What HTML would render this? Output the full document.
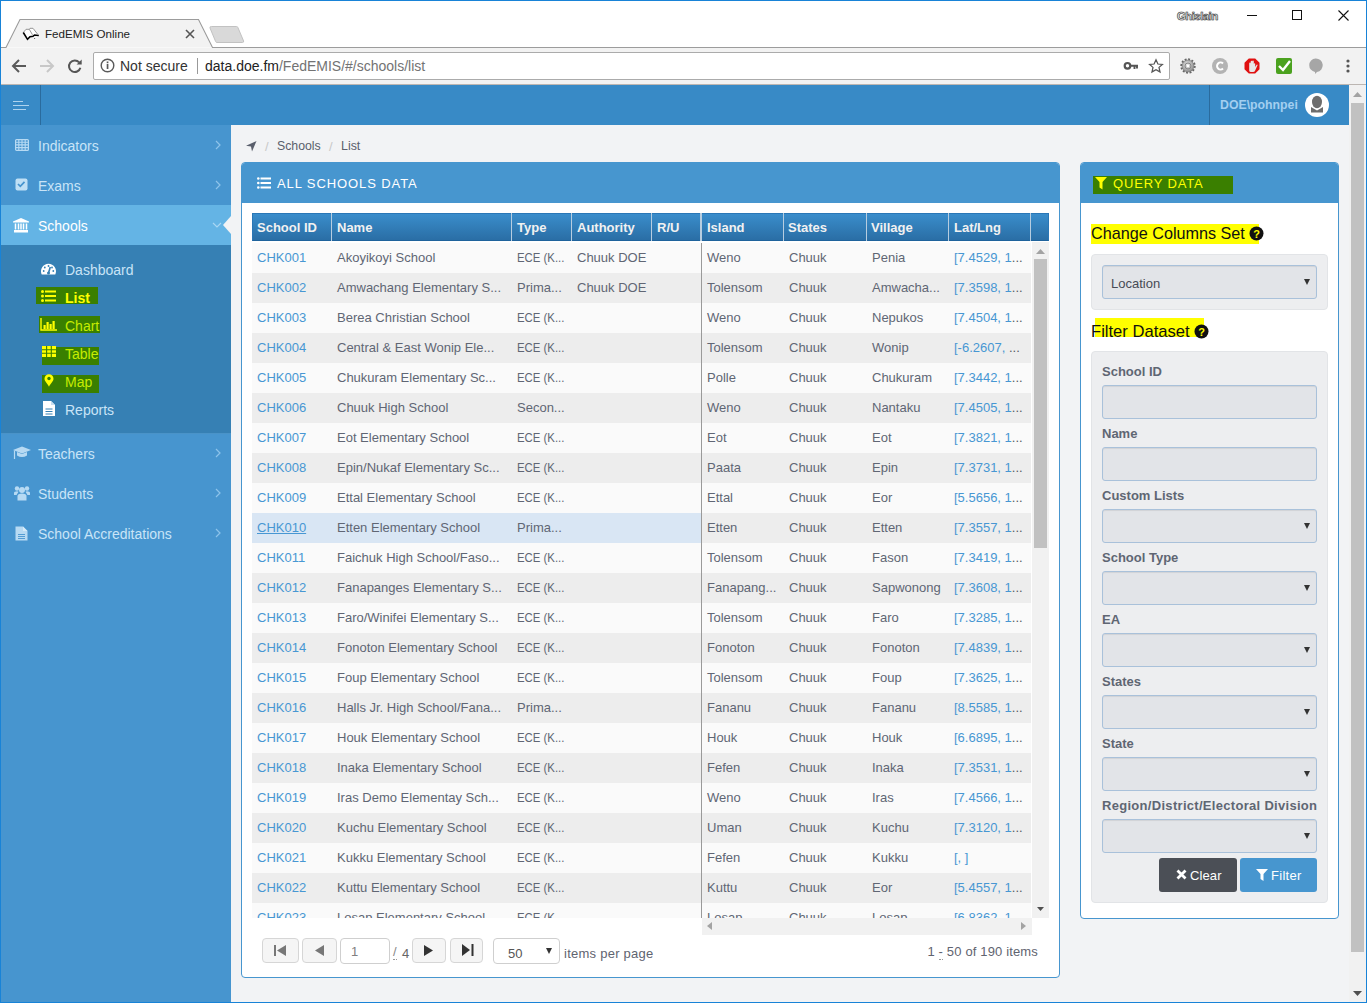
<!DOCTYPE html>
<html><head><meta charset="utf-8">
<style>
*{box-sizing:border-box;margin:0;padding:0}
html,body{width:1367px;height:1003px;overflow:hidden;background:#fff;font-family:"Liberation Sans",sans-serif;}
.a{position:absolute}
#win{position:absolute;left:0;top:0;width:1367px;height:1003px;border:1px solid #1883d7;}
/* chrome */
#toolbar{left:1px;top:48px;width:1365px;height:37px;background:#f2f2f2;}
#addr{left:93px;top:52px;width:1077px;height:28px;background:#fff;border:1px solid #ababab;border-radius:2px;}
.ctext{font-size:14px;color:#303030;white-space:nowrap}
/* page */
#hdr{left:1px;top:85px;width:1348px;height:40px;background:#388ac6;}
#side{left:1px;top:125px;width:230px;height:877px;background:#4795cf;}
#content{left:231px;top:125px;width:1118px;height:877px;background:#f2f3f5;}
#vscroll{left:1349px;top:85px;width:17px;height:917px;background:#f1f1f1;}
.sitem{position:absolute;left:0;width:230px;height:40px;color:#c9e4f7;font-size:14px;}
.sitem .t{position:absolute;left:37px;top:13px;white-space:nowrap}
.sitem .chev{position:absolute;left:214px;top:15px;width:6px;height:10px}
.sub{position:absolute;left:64px;font-size:14px;color:#c9e4f7;white-space:nowrap}
.hl{position:absolute;background:#3a7f00}
/* panel */
.panel{position:absolute;border:1px solid #4796cf;border-radius:4px;background:#fff;overflow:hidden}
.phead{position:absolute;left:0;top:0;right:0;height:40px;background:#4796cf;}
.ptitle{position:absolute;top:13px;font-size:13px;color:#fff;letter-spacing:0.9px;white-space:nowrap}
/* grid */
#ghead{left:252px;top:213px;width:797px;height:28px;background:linear-gradient(#3a8dcb,#2a6ea5);border:1px solid #2a77b6;border-bottom-color:#1f639c}
.hc{position:absolute;top:6px;font-size:13px;font-weight:bold;color:#f1f1f1;white-space:nowrap}
.hd{position:absolute;top:-1px;width:1px;height:28px;background:#b7cde0}
#gleft{left:252px;top:243px;width:449px;height:675px;overflow:hidden}
#gright{left:702px;top:243px;width:329px;height:675px;overflow:hidden}
.row{position:absolute;left:0;width:100%;height:30px}
.odd{background:#fafafa}.even{background:#ededed}.sel{background:#d9e6f4}.odd2{background:#fafafa}
.c{position:absolute;top:7px;font-size:13px;color:#606674;white-space:nowrap}
.lnk{color:#4797d3}
.dots{color:#555a63}
.ul{text-decoration:underline}
.ece{transform:scaleX(0.875);transform-origin:0 0}
.btn{position:absolute;background:#f5f5f5;border:1px solid #d6d6d6;border-radius:4px}
.lbl{position:absolute;left:1102px;font-size:13px;font-weight:bold;color:#5f6673;white-space:nowrap}
.inp{position:absolute;left:1102px;width:215px;height:34px;background:#e2e4e8;border:1px solid #a9c1da;border-radius:3px;box-shadow:inset 0 1px 1px rgba(0,0,0,.075)}
.caret{position:absolute;width:0;height:0;border-left:3px solid transparent;border-right:3px solid transparent;border-top:6px solid #333}
</style></head><body>
<div id="win"></div>
<!-- tab strip -->
<svg class="a" style="left:1px;top:1px" width="1365" height="47">
  <path d="M0 46.5 H5 L19 18.5 H197.5 L211.5 46.5 H1365" fill="#f2f2f2" stroke="#9c9c9c" stroke-width="1.1"/>
  <path d="M210.5 25.5 H235.5 a1.5 1.5 0 0 1 1.4 1 L242.6 40 a1.2 1.2 0 0 1 -1.1 1.5 H216 a1.5 1.5 0 0 1 -1.4 -1 L209 27 a1.2 1.2 0 0 1 1.1 -1.5z" fill="#d9d9d9" stroke="#c2c2c2" stroke-width="1"/>
</svg>
<div id="toolbar" class="a"></div>
<svg class="a" style="left:20px;top:24px" width="24" height="20" viewBox="0 0 24 20"><path d="M3.3 8.5 L6 5.3 L9.3 5.2 L10 4.3 L13 4.3 L17.5 10 L18.8 11.5 L14 12 L12.5 13 L9 13 L7.5 15.5 Z" fill="#fff"/><path d="M3.3 8.5 L6 5.3 L9.3 5.3 L10 4.3 L13 4.3 L17.5 10 M9.3 5.3 L12.5 10.8" fill="none" stroke="#8a8a8a" stroke-width="0.9"/><path d="M3.3 8.5 L7.5 15.3 L10 12.8 L13 12.3 L14.5 11 L18.8 11.5" fill="none" stroke="#000" stroke-width="1.6"/><circle cx="14.6" cy="14.5" r="0.6" fill="#555"/></svg>
<div class="a ctext" style="left:45px;top:27px;font-size:11.6px;color:#222">FedEMIS Online</div>
<svg class="a" style="left:185px;top:29px" width="10" height="10"><path d="M1 1L9 9M9 1L1 9" stroke="#555" stroke-width="1.6"/></svg>
<!-- title bar right -->
<div class="a" style="left:1177px;top:10px;font-size:11.5px;font-weight:bold;letter-spacing:-0.6px;color:#f0f0f0;-webkit-text-stroke:0.5px #333;text-shadow:0 0 1px #555;white-space:nowrap">Ghislain</div>
<div class="a" style="left:1247px;top:15px;width:10px;height:1px;background:#111"></div>
<div class="a" style="left:1292px;top:10px;width:10px;height:10px;border:1px solid #111"></div>
<svg class="a" style="left:1337px;top:9px" width="13" height="13"><path d="M1.5 1.5L11.5 11.5M11.5 1.5L1.5 11.5" stroke="#111" stroke-width="1.1"/></svg>
<!-- nav -->
<svg class="a" style="left:11px;top:58px" width="17" height="16"><path d="M15 8H2M8 2L2 8L8 14" fill="none" stroke="#5a5a5a" stroke-width="2"/></svg>
<svg class="a" style="left:39px;top:58px" width="17" height="16"><path d="M1 8H14M8 2L14 8L8 14" fill="none" stroke="#c8c8c8" stroke-width="2"/></svg>
<svg class="a" style="left:66px;top:57px" width="17" height="17"><path d="M13.2 5.4 A5.8 5.8 0 1 0 14.4 10.8" fill="none" stroke="#555" stroke-width="2"/><path d="M10.6 7.6 H15.7 V2.4 Z" fill="#555"/></svg>
<div id="addr" class="a"></div>
<div class="a" style="left:1px;top:84px;width:1365px;height:1px;background:#bcb6b2"></div>
<svg class="a" style="left:100px;top:58px" width="16" height="16"><circle cx="7.5" cy="7.5" r="6.3" fill="none" stroke="#5a5a5a" stroke-width="1.4"/><rect x="6.7" y="6" width="1.7" height="5" fill="#5a5a5a"/><rect x="6.7" y="3.5" width="1.7" height="1.7" fill="#5a5a5a"/></svg>
<div class="a ctext" style="left:120px;top:58px;color:#333">Not secure</div>
<div class="a" style="left:197px;top:58px;width:1px;height:16px;background:#999"></div>
<div class="a ctext" style="left:205px;top:58px;color:#222">data.doe.fm<span style="color:#737373">/FedEMIS/#/schools/list</span></div>
<svg class="a" style="left:1123px;top:60px" width="16" height="12"><circle cx="4.5" cy="5.8" r="2.8" fill="none" stroke="#555" stroke-width="2.2"/><path d="M7 5.8H15M11.5 5.8V9M14 5.8V8.5" stroke="#555" stroke-width="1.9"/></svg>
<svg class="a" style="left:1148px;top:58px" width="16" height="16"><path d="M8 1.8 L9.9 6 L14.4 6.4 L11 9.4 L12 13.9 L8 11.6 L4 13.9 L5 9.4 L1.6 6.4 L6.1 6 Z" fill="none" stroke="#555" stroke-width="1.25"/></svg>
<svg class="a" style="left:1180px;top:58px" width="16" height="16"><defs><radialGradient id="gg" cx="0.45" cy="0.4" r="0.6"><stop offset="0" stop-color="#eee"/><stop offset="1" stop-color="#8a8a8a"/></radialGradient></defs><circle cx="8" cy="8" r="6.6" fill="none" stroke="#666" stroke-width="2.2" stroke-dasharray="1.9 1.55"/><circle cx="8" cy="8" r="6" fill="url(#gg)" stroke="#777" stroke-width="0.6"/><circle cx="8" cy="8" r="3" fill="none" stroke="#888" stroke-width="1"/><circle cx="8" cy="8" r="1.2" fill="#fff"/></svg>
<svg class="a" style="left:1212px;top:58px" width="16" height="16"><circle cx="8" cy="8" r="8" fill="#b3b3b3"/><path d="M11 5.5 A3.5 3.5 0 1 0 11 10.5" fill="none" stroke="#fff" stroke-width="2"/></svg>
<svg class="a" style="left:1244px;top:58px" width="16" height="16"><path d="M4.8 0.5H11.2L15.5 4.8V11.2L11.2 15.5H4.8L0.5 11.2V4.8Z" fill="#e01010"/><path d="M5.2 12.5 V5.5 Q5.2 4.6 6 4.6 Q6.7 4.6 6.7 5.5 V3.6 Q6.7 2.7 7.5 2.7 Q8.3 2.7 8.3 3.6 V3.4 Q8.3 2.6 9 2.6 Q9.8 2.6 9.8 3.4 V6 Q9.8 5.2 10.5 5.2 Q11.2 5.2 11.2 6 V9 L12.6 6.8 Q13.2 6.2 13.6 6.9 L11.2 12.5 Q10.6 14 9 14 H7 Q5.2 14 5.2 12.5Z" fill="#e6e6e6"/></svg>
<svg class="a" style="left:1276px;top:58px" width="17" height="16"><rect x="0" y="0" width="16" height="16" rx="2" fill="#4ba21f"/><path d="M3 8 L7 12 L14 3" fill="none" stroke="#fff" stroke-width="2.4"/></svg>
<svg class="a" style="left:1308px;top:58px" width="15" height="16"><path d="M7.5 0.5 A6.8 6.8 0 0 1 9 14 L7 16 V14 A6.8 6.8 0 0 1 7.5 0.5Z" fill="#a6a6a6"/></svg>
<svg class="a" style="left:1346px;top:59px" width="4" height="14"><circle cx="2" cy="2" r="1.6" fill="#555"/><circle cx="2" cy="7" r="1.6" fill="#555"/><circle cx="2" cy="12" r="1.6" fill="#555"/></svg>

<!-- header -->
<div id="hdr" class="a"></div>
<div class="a" style="left:40px;top:85px;width:1px;height:40px;background:#2a6b9d"></div>
<div class="a" style="left:1209px;top:85px;width:1px;height:40px;background:#2a6b9d"></div>
<div class="a" style="left:13px;top:101px;width:10px;height:1px;background:#aed3ee"></div>
<div class="a" style="left:13px;top:105px;width:16px;height:1px;background:#aed3ee"></div>
<div class="a" style="left:13px;top:109px;width:13px;height:1px;background:#aed3ee"></div>
<div class="a" style="left:1220px;top:98px;font-size:12.3px;font-weight:bold;color:#a3cff0;white-space:nowrap">DOE\pohnpei</div>
<svg class="a" style="left:1305px;top:93px" width="24" height="24"><circle cx="12" cy="12" r="12" fill="#fff"/><ellipse cx="12" cy="9" rx="5" ry="6.2" fill="#6d6d6d"/><path d="M6 14 L12 17.5 L18 14 V19.5 H6Z" fill="#6d6d6d"/></svg>

<!-- sidebar -->
<div id="side" class="a">
  <div class="sitem" style="top:0">
    <svg class="a" style="left:14px;top:14px" width="14" height="12"><rect x="0.6" y="0.6" width="12.8" height="10.8" rx="1" fill="none" stroke="#b7daf3" stroke-width="1.2"/><path d="M0 3.2H14M0 5.9H14M0 8.6H14M3.8 0V12M7 0V12M10.2 0V12" stroke="#b7daf3" stroke-width="1.1"/></svg>
    <span class="t">Indicators</span>
    <svg class="chev" viewBox="0 0 6 10"><path d="M1 1L5 5L1 9" fill="none" stroke="#8ec3ea" stroke-width="1.2"/></svg>
  </div>
  <div class="sitem" style="top:40px">
    <svg class="a" style="left:14px;top:13px" width="13" height="13"><rect x="0.5" y="0.5" width="12" height="12" rx="2" fill="#c0e0f5"/><path d="M3 6 L5.3 8.3 L9.5 3.8" fill="none" stroke="#4795cf" stroke-width="1.7"/></svg>
    <span class="t">Exams</span>
    <svg class="chev" viewBox="0 0 6 10"><path d="M1 1L5 5L1 9" fill="none" stroke="#8ec3ea" stroke-width="1.2"/></svg>
  </div>
  <div class="sitem" style="top:80px;background:#64b4e5;color:#fff">
    <svg class="a" style="left:12px;top:13px" width="16" height="15"><path d="M8 0 L16 3.5 V4.5 H0 V3.5 Z" fill="#fff"/><rect x="1" y="12" width="14" height="2.5" fill="#fff"/><path d="M2.5 5.5V11.5M5.5 5.5V11.5M8 5.5V11.5M10.5 5.5V11.5M13.5 5.5V11.5" stroke="#fff" stroke-width="1.5"/></svg>
    <span class="t">Schools</span>
    <svg class="a" style="left:211px;top:17px" width="10" height="6"><path d="M1 1L5 5L9 1" fill="none" stroke="#a9d6f3" stroke-width="1.2"/></svg>
    <svg class="a" style="left:222px;top:11px" width="8" height="18"><path d="M8 0 L0 9 L8 18Z" fill="#f2f3f5"/></svg>
  </div>
  <div class="a" style="left:0;top:120px;width:230px;height:188px;background:#3680b4"></div>
  <div class="a" style="left:0;top:308px;width:230px;height:1px;background:#4a93c8"></div>
  <!-- submenu -->
  <svg class="a" style="left:40px;top:138px" width="16" height="12" viewBox="0.5 0 16 12"><path d="M1.2 11.5 A7.5 7.5 0 1 1 14.8 11.5 Z" fill="#fff"/><path d="M8 10 L9.8 4" stroke="#3680b4" stroke-width="1.6"/><circle cx="8" cy="10" r="1.5" fill="#3680b4"/><circle cx="3.2" cy="8" r="0.9" fill="#3680b4"/><circle cx="4.3" cy="4.5" r="0.9" fill="#3680b4"/><circle cx="8" cy="3" r="0.9" fill="#3680b4"/><circle cx="12.8" cy="8" r="0.9" fill="#3680b4"/><circle cx="11.5" cy="4.5" r="0.9" fill="#3680b4"/></svg>
  <span class="sub" style="top:137px">Dashboard</span>
  <div class="hl" style="left:35px;top:162px;width:62px;height:17px"></div>
  <svg class="a" style="left:40px;top:165px" width="16" height="12"><circle cx="1.5" cy="1.5" r="1.5" fill="#ff0"/><circle cx="1.5" cy="6" r="1.5" fill="#ff0"/><circle cx="1.5" cy="10.5" r="1.5" fill="#ff0"/><path d="M4 1.5H15M4 6H15M4 10.5H15" stroke="#ff0" stroke-width="2"/></svg>
  <span class="sub" style="top:165px;color:#ff0;font-weight:bold">List</span>
  <div class="hl" style="left:38px;top:191px;width:61px;height:17px"></div>
  <svg class="a" style="left:39px;top:193px" width="17" height="13"><path d="M1 0V12H17" fill="none" stroke="#ff0" stroke-width="1.4"/><path d="M4.6 11V7M7.6 11V4M10.6 11V6M13.6 11V3" stroke="#ff0" stroke-width="2.2"/></svg>
  <span class="sub" style="top:193px;color:#c6ec00">Chart</span>
  <div class="hl" style="left:41px;top:222px;width:57px;height:18px"></div>
  <svg class="a" style="left:41px;top:221px" width="14" height="11"><rect x="0" y="0" width="14" height="11" fill="#ff0"/><path d="M0 3.8H14M0 7.3H14M4.6 0V11M9.3 0V11" stroke="#3a7f00" stroke-width="1.1"/></svg>
  <span class="sub" style="top:221px;color:#c6ec00">Table</span>
  <div class="hl" style="left:41px;top:250px;width:57px;height:18px"></div>
  <svg class="a" style="left:43px;top:249px" width="10" height="13"><path d="M5 0.3 A4.5 4.5 0 0 1 9.5 4.8 C9.5 7.5 6.5 9.5 5 12.7 C3.5 9.5 0.5 7.5 0.5 4.8 A4.5 4.5 0 0 1 5 0.3Z" fill="#ff0"/><circle cx="5" cy="4.5" r="1.7" fill="#3a7f00"/></svg>
  <span class="sub" style="top:249px;color:#c6ec00">Map</span>
  <svg class="a" style="left:42px;top:276px" width="12" height="15"><path d="M0 0H8L12 4V15H0Z" fill="#fff"/><path d="M8 0V4H12" fill="#c9dff0"/><path d="M2.5 8H9.5M2.5 10.5H9.5M2.5 13H9.5" stroke="#3680b4" stroke-width="1"/></svg>
  <span class="sub" style="top:277px">Reports</span>

  <div class="sitem" style="top:308px">
    <svg class="a" style="left:12px;top:13px" width="18" height="14"><path d="M9 0.5 L18 4 L9 7.5 L0 4Z" fill="#b7daf3"/><path d="M4 6 V9.5 Q9 12.5 14 9.5 V6 L9 8Z" fill="#b7daf3"/><path d="M1.5 4.5V13" stroke="#b7daf3" stroke-width="1.2"/></svg>
    <span class="t">Teachers</span>
    <svg class="chev" viewBox="0 0 6 10"><path d="M1 1L5 5L1 9" fill="none" stroke="#8ec3ea" stroke-width="1.2"/></svg>
  </div>
  <div class="sitem" style="top:348px">
    <svg class="a" style="left:13px;top:13px" width="16" height="15"><circle cx="8" cy="4" r="3" fill="#b7daf3"/><circle cx="3" cy="2.5" r="2.2" fill="#b7daf3"/><circle cx="13" cy="2.5" r="2.2" fill="#b7daf3"/><path d="M3.5 14.5V10Q3.5 7.5 8 7.5Q12.5 7.5 12.5 10V14.5Z" fill="#b7daf3"/><path d="M0 9V7Q0 5.3 3 5.3Q4 5.3 4.5 5.8L2.5 9Z M16 9V7Q16 5.3 13 5.3Q12 5.3 11.5 5.8L13.5 9Z" fill="#b7daf3"/></svg>
    <span class="t">Students</span>
    <svg class="chev" viewBox="0 0 6 10"><path d="M1 1L5 5L1 9" fill="none" stroke="#8ec3ea" stroke-width="1.2"/></svg>
  </div>
  <div class="sitem" style="top:388px">
    <svg class="a" style="left:14px;top:13px" width="13" height="15"><path d="M0.5 0.5H8L12.5 5V14.5H0.5Z" fill="#b7daf3"/><path d="M8 0.5V5H12.5" fill="#d6ebf9"/><path d="M3 8.5H10M3 10.5H10M3 12.5H10" stroke="#4795cf" stroke-width="0.9"/></svg>
    <span class="t">School Accreditations</span>
    <svg class="chev" viewBox="0 0 6 10"><path d="M1 1L5 5L1 9" fill="none" stroke="#8ec3ea" stroke-width="1.2"/></svg>
  </div>
</div>

<!-- content -->
<div id="content" class="a"></div>
<div id="vscroll" class="a"></div>
<svg class="a" style="left:1353px;top:92px" width="9" height="5"><path d="M0 5L4.5 0L9 5Z" fill="#a3a3a3"/></svg>
<div class="a" style="left:1351px;top:103px;width:13px;height:849px;background:#c1c1c1"></div>
<svg class="a" style="left:1353px;top:991px" width="9" height="5"><path d="M0 0L4.5 5L9 0Z" fill="#505050"/></svg>

<!-- breadcrumb -->
<svg class="a" style="left:246px;top:141px" width="11" height="11"><path d="M0 4.8 L10.5 0 L6 10.5 L5 5.5Z" fill="#5a5f6c"/></svg>
<div class="a" style="left:265px;top:139px;font-size:13px;color:#c8c8c8">/</div>
<div class="a" style="left:277px;top:139px;font-size:12.3px;color:#5a5f6c">Schools</div>
<div class="a" style="left:329px;top:139px;font-size:13px;color:#c8c8c8">/</div>
<div class="a" style="left:341px;top:139px;font-size:12.4px;color:#5a5f6c">List</div>

<!-- left panel -->
<div class="panel" style="left:241px;top:162px;width:819px;height:816px">
  <div class="phead" style="height:40px"></div>
  <svg class="a" style="left:15px;top:14px" width="14" height="12"><circle cx="1.3" cy="1.5" r="1.3" fill="#fff"/><circle cx="1.3" cy="6" r="1.3" fill="#fff"/><circle cx="1.3" cy="10.5" r="1.3" fill="#fff"/><path d="M3.5 1.5H14M3.5 6H14M3.5 10.5H14" stroke="#fff" stroke-width="2"/></svg>
  <div class="ptitle" style="left:35px">ALL SCHOOLS DATA</div>
</div>

<!-- grid header -->
<div id="ghead" class="a">
  <span class="hc" style="left:4px">School ID</span>
  <div class="hd" style="left:78px"></div>
  <span class="hc" style="left:84px">Name</span>
  <div class="hd" style="left:258px"></div>
  <span class="hc" style="left:264px">Type</span>
  <div class="hd" style="left:318px"></div>
  <span class="hc" style="left:324px">Authority</span>
  <div class="hd" style="left:398px"></div>
  <span class="hc" style="left:404px">R/U</span>
  <div class="hd" style="left:447px;width:2px"></div>
  <span class="hc" style="left:454px">Island</span>
  <div class="hd" style="left:530px"></div>
  <span class="hc" style="left:535px">States</span>
  <div class="hd" style="left:613px"></div>
  <span class="hc" style="left:618px">Village</span>
  <div class="hd" style="left:695px"></div>
  <span class="hc" style="left:701px">Lat/Lng</span>
  <div class="hd" style="left:777px"></div>
</div>

<div id="gleft" class="a">
<div class="row odd" style="top:0px"><span class="c lnk" style="left:5px">CHK001</span><span class="c" style="left:85px">Akoyikoyi School</span><span class="c ece" style="left:265px">ECE (K...</span><span class="c" style="left:325px">Chuuk DOE</span></div>
<div class="row even" style="top:30px"><span class="c lnk" style="left:5px">CHK002</span><span class="c" style="left:85px">Amwachang Elementary S...</span><span class="c" style="left:265px">Prima...</span><span class="c" style="left:325px">Chuuk DOE</span></div>
<div class="row odd" style="top:60px"><span class="c lnk" style="left:5px">CHK003</span><span class="c" style="left:85px">Berea Christian School</span><span class="c ece" style="left:265px">ECE (K...</span><span class="c" style="left:325px"></span></div>
<div class="row even" style="top:90px"><span class="c lnk" style="left:5px">CHK004</span><span class="c" style="left:85px">Central &amp; East Wonip Ele...</span><span class="c ece" style="left:265px">ECE (K...</span><span class="c" style="left:325px"></span></div>
<div class="row odd" style="top:120px"><span class="c lnk" style="left:5px">CHK005</span><span class="c" style="left:85px">Chukuram Elementary Sc...</span><span class="c ece" style="left:265px">ECE (K...</span><span class="c" style="left:325px"></span></div>
<div class="row even" style="top:150px"><span class="c lnk" style="left:5px">CHK006</span><span class="c" style="left:85px">Chuuk High School</span><span class="c" style="left:265px">Secon...</span><span class="c" style="left:325px"></span></div>
<div class="row odd" style="top:180px"><span class="c lnk" style="left:5px">CHK007</span><span class="c" style="left:85px">Eot Elementary School</span><span class="c ece" style="left:265px">ECE (K...</span><span class="c" style="left:325px"></span></div>
<div class="row even" style="top:210px"><span class="c lnk" style="left:5px">CHK008</span><span class="c" style="left:85px">Epin/Nukaf Elementary Sc...</span><span class="c ece" style="left:265px">ECE (K...</span><span class="c" style="left:325px"></span></div>
<div class="row odd" style="top:240px"><span class="c lnk" style="left:5px">CHK009</span><span class="c" style="left:85px">Ettal Elementary School</span><span class="c ece" style="left:265px">ECE (K...</span><span class="c" style="left:325px"></span></div>
<div class="row sel" style="top:270px"><span class="c lnk ul" style="left:5px">CHK010</span><span class="c" style="left:85px">Etten Elementary School</span><span class="c" style="left:265px">Prima...</span><span class="c" style="left:325px"></span></div>
<div class="row odd" style="top:300px"><span class="c lnk" style="left:5px">CHK011</span><span class="c" style="left:85px">Faichuk High School/Faso...</span><span class="c ece" style="left:265px">ECE (K...</span><span class="c" style="left:325px"></span></div>
<div class="row even" style="top:330px"><span class="c lnk" style="left:5px">CHK012</span><span class="c" style="left:85px">Fanapanges Elementary S...</span><span class="c ece" style="left:265px">ECE (K...</span><span class="c" style="left:325px"></span></div>
<div class="row odd" style="top:360px"><span class="c lnk" style="left:5px">CHK013</span><span class="c" style="left:85px">Faro/Winifei Elementary S...</span><span class="c ece" style="left:265px">ECE (K...</span><span class="c" style="left:325px"></span></div>
<div class="row even" style="top:390px"><span class="c lnk" style="left:5px">CHK014</span><span class="c" style="left:85px">Fonoton Elementary School</span><span class="c ece" style="left:265px">ECE (K...</span><span class="c" style="left:325px"></span></div>
<div class="row odd" style="top:420px"><span class="c lnk" style="left:5px">CHK015</span><span class="c" style="left:85px">Foup Elementary School</span><span class="c ece" style="left:265px">ECE (K...</span><span class="c" style="left:325px"></span></div>
<div class="row even" style="top:450px"><span class="c lnk" style="left:5px">CHK016</span><span class="c" style="left:85px">Halls Jr. High School/Fana...</span><span class="c" style="left:265px">Prima...</span><span class="c" style="left:325px"></span></div>
<div class="row odd" style="top:480px"><span class="c lnk" style="left:5px">CHK017</span><span class="c" style="left:85px">Houk Elementary School</span><span class="c ece" style="left:265px">ECE (K...</span><span class="c" style="left:325px"></span></div>
<div class="row even" style="top:510px"><span class="c lnk" style="left:5px">CHK018</span><span class="c" style="left:85px">Inaka Elementary School</span><span class="c ece" style="left:265px">ECE (K...</span><span class="c" style="left:325px"></span></div>
<div class="row odd" style="top:540px"><span class="c lnk" style="left:5px">CHK019</span><span class="c" style="left:85px">Iras Demo Elementay Sch...</span><span class="c ece" style="left:265px">ECE (K...</span><span class="c" style="left:325px"></span></div>
<div class="row even" style="top:570px"><span class="c lnk" style="left:5px">CHK020</span><span class="c" style="left:85px">Kuchu Elementary School</span><span class="c ece" style="left:265px">ECE (K...</span><span class="c" style="left:325px"></span></div>
<div class="row odd" style="top:600px"><span class="c lnk" style="left:5px">CHK021</span><span class="c" style="left:85px">Kukku Elementary School</span><span class="c ece" style="left:265px">ECE (K...</span><span class="c" style="left:325px"></span></div>
<div class="row even" style="top:630px"><span class="c lnk" style="left:5px">CHK022</span><span class="c" style="left:85px">Kuttu Elementary School</span><span class="c ece" style="left:265px">ECE (K...</span><span class="c" style="left:325px"></span></div>
<div class="row odd" style="top:660px"><span class="c lnk" style="left:5px">CHK023</span><span class="c" style="left:85px">Losap Elementary School</span><span class="c ece" style="left:265px">ECE (K...</span><span class="c" style="left:325px"></span></div>
</div>
<div class="a" style="left:701px;top:243px;width:1px;height:675px;background:#9a9a9a"></div>
<div id="gright" class="a">
<div class="row odd" style="top:0px"><span class="c" style="left:5px">Weno</span><span class="c" style="left:87px">Chuuk</span><span class="c" style="left:170px">Penia</span><span class="c lnk" style="left:252px">[7.4529, 1<span class="dots">...</span></span></div>
<div class="row even" style="top:30px"><span class="c" style="left:5px">Tolensom</span><span class="c" style="left:87px">Chuuk</span><span class="c" style="left:170px">Amwacha...</span><span class="c lnk" style="left:252px">[7.3598, 1<span class="dots">...</span></span></div>
<div class="row odd" style="top:60px"><span class="c" style="left:5px">Weno</span><span class="c" style="left:87px">Chuuk</span><span class="c" style="left:170px">Nepukos</span><span class="c lnk" style="left:252px">[7.4504, 1<span class="dots">...</span></span></div>
<div class="row even" style="top:90px"><span class="c" style="left:5px">Tolensom</span><span class="c" style="left:87px">Chuuk</span><span class="c" style="left:170px">Wonip</span><span class="c lnk" style="left:252px">[-6.2607, <span class="dots">...</span></span></div>
<div class="row odd" style="top:120px"><span class="c" style="left:5px">Polle</span><span class="c" style="left:87px">Chuuk</span><span class="c" style="left:170px">Chukuram</span><span class="c lnk" style="left:252px">[7.3442, 1<span class="dots">...</span></span></div>
<div class="row even" style="top:150px"><span class="c" style="left:5px">Weno</span><span class="c" style="left:87px">Chuuk</span><span class="c" style="left:170px">Nantaku</span><span class="c lnk" style="left:252px">[7.4505, 1<span class="dots">...</span></span></div>
<div class="row odd" style="top:180px"><span class="c" style="left:5px">Eot</span><span class="c" style="left:87px">Chuuk</span><span class="c" style="left:170px">Eot</span><span class="c lnk" style="left:252px">[7.3821, 1<span class="dots">...</span></span></div>
<div class="row even" style="top:210px"><span class="c" style="left:5px">Paata</span><span class="c" style="left:87px">Chuuk</span><span class="c" style="left:170px">Epin</span><span class="c lnk" style="left:252px">[7.3731, 1<span class="dots">...</span></span></div>
<div class="row odd" style="top:240px"><span class="c" style="left:5px">Ettal</span><span class="c" style="left:87px">Chuuk</span><span class="c" style="left:170px">Eor</span><span class="c lnk" style="left:252px">[5.5656, 1<span class="dots">...</span></span></div>
<div class="row even" style="top:270px"><span class="c" style="left:5px">Etten</span><span class="c" style="left:87px">Chuuk</span><span class="c" style="left:170px">Etten</span><span class="c lnk" style="left:252px">[7.3557, 1<span class="dots">...</span></span></div>
<div class="row odd" style="top:300px"><span class="c" style="left:5px">Tolensom</span><span class="c" style="left:87px">Chuuk</span><span class="c" style="left:170px">Fason</span><span class="c lnk" style="left:252px">[7.3419, 1<span class="dots">...</span></span></div>
<div class="row even" style="top:330px"><span class="c" style="left:5px">Fanapang...</span><span class="c" style="left:87px">Chuuk</span><span class="c" style="left:170px">Sapwonong</span><span class="c lnk" style="left:252px">[7.3608, 1<span class="dots">...</span></span></div>
<div class="row odd" style="top:360px"><span class="c" style="left:5px">Tolensom</span><span class="c" style="left:87px">Chuuk</span><span class="c" style="left:170px">Faro</span><span class="c lnk" style="left:252px">[7.3285, 1<span class="dots">...</span></span></div>
<div class="row even" style="top:390px"><span class="c" style="left:5px">Fonoton</span><span class="c" style="left:87px">Chuuk</span><span class="c" style="left:170px">Fonoton</span><span class="c lnk" style="left:252px">[7.4839, 1<span class="dots">...</span></span></div>
<div class="row odd" style="top:420px"><span class="c" style="left:5px">Tolensom</span><span class="c" style="left:87px">Chuuk</span><span class="c" style="left:170px">Foup</span><span class="c lnk" style="left:252px">[7.3625, 1<span class="dots">...</span></span></div>
<div class="row even" style="top:450px"><span class="c" style="left:5px">Fananu</span><span class="c" style="left:87px">Chuuk</span><span class="c" style="left:170px">Fananu</span><span class="c lnk" style="left:252px">[8.5585, 1<span class="dots">...</span></span></div>
<div class="row odd" style="top:480px"><span class="c" style="left:5px">Houk</span><span class="c" style="left:87px">Chuuk</span><span class="c" style="left:170px">Houk</span><span class="c lnk" style="left:252px">[6.6895, 1<span class="dots">...</span></span></div>
<div class="row even" style="top:510px"><span class="c" style="left:5px">Fefen</span><span class="c" style="left:87px">Chuuk</span><span class="c" style="left:170px">Inaka</span><span class="c lnk" style="left:252px">[7.3531, 1<span class="dots">...</span></span></div>
<div class="row odd" style="top:540px"><span class="c" style="left:5px">Weno</span><span class="c" style="left:87px">Chuuk</span><span class="c" style="left:170px">Iras</span><span class="c lnk" style="left:252px">[7.4566, 1<span class="dots">...</span></span></div>
<div class="row even" style="top:570px"><span class="c" style="left:5px">Uman</span><span class="c" style="left:87px">Chuuk</span><span class="c" style="left:170px">Kuchu</span><span class="c lnk" style="left:252px">[7.3120, 1<span class="dots">...</span></span></div>
<div class="row odd" style="top:600px"><span class="c" style="left:5px">Fefen</span><span class="c" style="left:87px">Chuuk</span><span class="c" style="left:170px">Kukku</span><span class="c lnk" style="left:252px">[, ]</span></div>
<div class="row even" style="top:630px"><span class="c" style="left:5px">Kuttu</span><span class="c" style="left:87px">Chuuk</span><span class="c" style="left:170px">Eor</span><span class="c lnk" style="left:252px">[5.4557, 1<span class="dots">...</span></span></div>
<div class="row odd" style="top:660px"><span class="c" style="left:5px">Losap</span><span class="c" style="left:87px">Chuuk</span><span class="c" style="left:170px">Losap</span><span class="c lnk" style="left:252px">[6.8362, 1<span class="dots">...</span></span></div>
</div>
<div class="a" style="left:702px;top:918px;width:330px;height:17px;background:#f1f1f1"></div>
<svg class="a" style="left:707px;top:922px" width="5" height="8"><path d="M5 0L0 4L5 8Z" fill="#a3a3a3"/></svg>
<svg class="a" style="left:1021px;top:922px" width="5" height="8"><path d="M0 0L5 4L0 8Z" fill="#a3a3a3"/></svg>
<div class="a" style="left:1032px;top:242px;width:17px;height:676px;background:#f1f1f1"></div>
<svg class="a" style="left:1036px;top:249px" width="9" height="5"><path d="M0 5L4.5 0L9 5Z" fill="#a3a3a3"/></svg>
<div class="a" style="left:1034px;top:259px;width:13px;height:289px;background:#c1c1c1"></div>
<svg class="a" style="left:1037px;top:907px" width="7" height="4"><path d="M0 0L3.5 4L7 0Z" fill="#505050"/></svg>

<!-- pager -->
<div class="btn" style="left:262px;top:938px;width:37px;height:25px"></div>
<svg class="a" style="left:274px;top:945px" width="13" height="11"><rect x="0" y="0" width="2" height="11" fill="#777"/><path d="M3 5.5L12 0V11Z" fill="#777"/></svg>
<div class="btn" style="left:302px;top:938px;width:35px;height:25px"></div>
<svg class="a" style="left:315px;top:945px" width="9" height="11"><path d="M0 5.5L9 0V11Z" fill="#777"/></svg>
<div class="a" style="left:340px;top:938px;width:50px;height:26px;background:#fff;border:1px solid #cfcfcf;border-radius:4px"></div>
<div class="a" style="left:351px;top:944px;font-size:13px;color:#808080">1</div>
<div class="a" style="left:393px;top:945px;font-size:13px;color:#888;border-bottom:1px dotted #999;line-height:14px">/</div><div class="a" style="left:402px;top:946px;font-size:13px;color:#666">4</div>
<div class="btn" style="left:412px;top:938px;width:34px;height:25px"></div>
<svg class="a" style="left:424px;top:945px" width="9" height="11"><path d="M9 5.5L0 0V11Z" fill="#333"/></svg>
<div class="btn" style="left:450px;top:938px;width:33px;height:25px"></div>
<svg class="a" style="left:462px;top:944px" width="12" height="12"><path d="M8 6L0 0V12Z" fill="#333"/><rect x="9.5" y="0" width="2" height="12" fill="#333"/></svg>
<div class="a" style="left:493px;top:938px;width:67px;height:26px;background:#fff;border:1px solid #cfcfcf;border-radius:4px"></div>
<div class="a" style="left:508px;top:946px;font-size:13px;color:#555">50</div>
<div class="caret" style="left:546px;top:948px"></div>
<div class="a" style="left:564px;top:946px;font-size:13px;color:#5f6470;letter-spacing:0.25px;white-space:nowrap">items per page</div>
<div class="a" style="right:329px;top:944px;font-size:13px;color:#5f6470;letter-spacing:0.15px;white-space:nowrap">1 <span style="border-bottom:1px dotted #999">-</span> 50 of 190 items</div>

<!-- right panel -->
<div class="panel" style="left:1080px;top:162px;width:259px;height:757px">
  <div class="phead" style="height:40px"></div>
</div>
<div class="hl" style="left:1093px;top:176px;width:140px;height:18px"></div>
<svg class="a" style="left:1095px;top:177px" width="12" height="13"><path d="M0 0H12L7.5 5V12.5L4.5 10.5V5Z" fill="#ff0"/></svg>
<div class="a" style="left:1113px;top:176px;font-size:13px;color:#ff0;letter-spacing:0.85px;white-space:nowrap">QUERY DATA</div>
<div class="a" style="left:1091px;top:224px;width:168px;height:20px;background:#ff0"></div>
<div class="a" style="left:1091px;top:224px;font-size:16.2px;color:#111;white-space:nowrap">Change Columns Set</div>
<svg class="a" style="left:1249px;top:226px" width="15" height="15"><circle cx="7.5" cy="7.5" r="7" fill="#111"/><text x="7.5" y="11.8" font-size="11" font-weight="bold" text-anchor="middle" fill="#ff0" font-family="Liberation Sans">?</text></svg>
<div class="a" style="left:1091px;top:254px;width:237px;height:56px;background:#edeef0;border:1px solid #e2e4e7;border-radius:4px"></div>
<div class="inp" style="top:265px"></div>
<div class="a" style="left:1111px;top:276px;font-size:13px;color:#474b55">Location</div>
<div class="caret" style="left:1304px;top:279px"></div>
<div class="a" style="left:1095px;top:318px;width:109px;height:19px;background:#ff0"></div>
<div class="a" style="left:1091px;top:322px;font-size:16.6px;color:#111;white-space:nowrap">Filter Dataset</div>
<svg class="a" style="left:1194px;top:324px" width="15" height="15"><circle cx="7.5" cy="7.5" r="7" fill="#111"/><text x="7.5" y="11.8" font-size="11" font-weight="bold" text-anchor="middle" fill="#ff0" font-family="Liberation Sans">?</text></svg>
<div class="a" style="left:1091px;top:351px;width:237px;height:552px;background:#edeef0;border:1px solid #e2e4e7;border-radius:4px"></div>
<div class="lbl" style="top:364px">School ID</div>
<div class="inp" style="top:385px"></div>
<div class="lbl" style="top:426px">Name</div>
<div class="inp" style="top:447px"></div>
<div class="lbl" style="top:488px">Custom Lists</div>
<div class="inp" style="top:509px"></div><div class="caret" style="left:1304px;top:523px"></div>
<div class="lbl" style="top:550px">School Type</div>
<div class="inp" style="top:571px"></div><div class="caret" style="left:1304px;top:585px"></div>
<div class="lbl" style="top:612px">EA</div>
<div class="inp" style="top:633px"></div><div class="caret" style="left:1304px;top:647px"></div>
<div class="lbl" style="top:674px">States</div>
<div class="inp" style="top:695px"></div><div class="caret" style="left:1304px;top:709px"></div>
<div class="lbl" style="top:736px">State</div>
<div class="inp" style="top:757px"></div><div class="caret" style="left:1304px;top:771px"></div>
<div class="lbl" style="top:798px;letter-spacing:0.3px">Region/District/Electoral Division</div>
<div class="inp" style="top:819px"></div><div class="caret" style="left:1304px;top:833px"></div>
<div class="a" style="left:1159px;top:858px;width:78px;height:34px;background:#4b4f56;border-radius:3px"></div>
<svg class="a" style="left:1176px;top:869px" width="11" height="11"><path d="M1.5 1.5L9.5 9.5M9.5 1.5L1.5 9.5" stroke="#fff" stroke-width="2.8"/></svg>
<div class="a" style="left:1190px;top:868px;font-size:13px;color:#fff;letter-spacing:0.1px">Clear</div>
<div class="a" style="left:1240px;top:858px;width:77px;height:34px;background:#4796cf;border-radius:3px"></div>
<svg class="a" style="left:1256px;top:869px" width="12" height="12"><path d="M0 0H12L7.5 5V12L4.5 10V5Z" fill="#fff"/></svg>
<div class="a" style="left:1271px;top:868px;font-size:13px;color:#fff;letter-spacing:0.3px">Filter</div>
</body></html>
